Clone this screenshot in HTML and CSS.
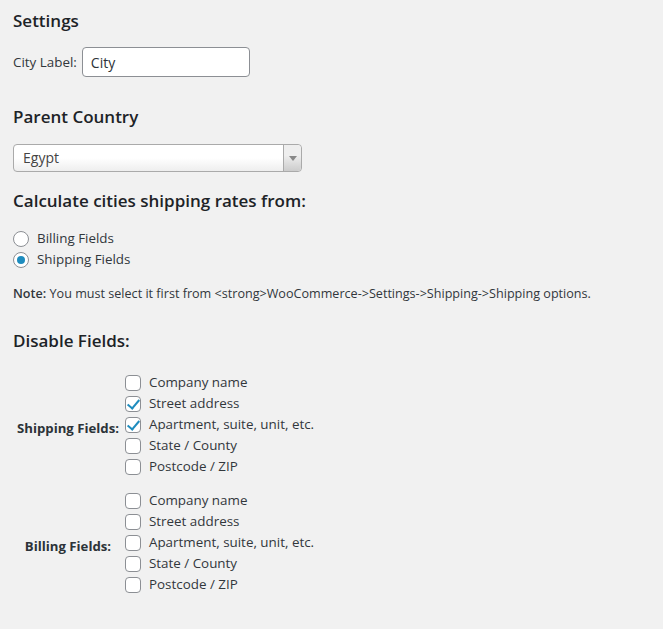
FILE: index.html
```html
<!DOCTYPE html>
<html lang="en">

<head>
    <meta charset="UTF-8">
    <meta name="viewport" content="width=device-width, initial-scale=1.0">
    <title>Settings</title>
    <link rel="stylesheet" href="styles.css">
</head>

<body>
<div class="wrap">
    <h2 class="title">Settings</h2>

    <div class="field-row">
        <label for="city_label">City Label:</label>
        <input type="text" id="city_label" class="regular-text" value="City">
    </div>

    <h2 class="title parent">Parent Country</h2>
    <div class="select2">
        <span class="select2-text">Egypt</span>
        <span class="select2-arrow"><b></b></span>
    </div>

    <h2 class="title calc">Calculate cities shipping rates from:</h2>
    <div class="radio-list">
        <label><input type="radio" name="rates_from" value="billing">Billing Fields</label>
        <label><input type="radio" name="rates_from" value="shipping" checked>Shipping Fields</label>
    </div>
    <p class="note"><strong>Note:</strong> You must select it first from &lt;strong&gt;WooCommerce-&gt;Settings-&gt;Shipping-&gt;Shipping options.</p>

    <h2 class="title disable">Disable Fields:</h2>
    <table class="fields-table">
        <tr>
            <th>Shipping Fields:</th>
            <td>
                <label><input type="checkbox">Company name</label>
                <label><input type="checkbox" checked>Street address</label>
                <label><input type="checkbox" checked>Apartment, suite, unit, etc.</label>
                <label><input type="checkbox">State / County</label>
                <label><input type="checkbox">Postcode / ZIP</label>
            </td>
        </tr>
        <tr class="billing">
            <th>Billing Fields:</th>
            <td>
                <label><input type="checkbox">Company name</label>
                <label><input type="checkbox">Street address</label>
                <label><input type="checkbox">Apartment, suite, unit, etc.</label>
                <label><input type="checkbox">State / County</label>
                <label><input type="checkbox">Postcode / ZIP</label>
            </td>
        </tr>
    </table>
</div>
</body>

</html>
```
FILE: styles.css
```css
body {
    margin: 0;
    background: #f1f1f1;
    color: #32373c;
    font-family: "Open Sans", "Noto Sans", sans-serif;
    font-size: 13.4px;
    line-height: 1.4em;
}
.wrap {
    padding: 0 13px;
}
.title {
    color: #1d2327;
    font-size: 17px;
    font-weight: 600;
    line-height: 22px;
    margin: 10px 0 0;
}
.title.parent {
    margin-top: 29px;
}
.title.calc {
    margin-top: 18px;
}
.title.disable {
    margin-top: 26px;
}
.field-row {
    display: flex;
    align-items: center;
    gap: 5px;
    margin-top: 15px;
}
.regular-text {
    box-sizing: border-box;
    width: 168px;
    height: 30px;
    margin: 0;
    padding: 0 8px;
    border: 1px solid #8c8f94;
    border-radius: 4px;
    background: #fff;
    color: #2c3338;
    font: inherit;
    font-size: 14px;
}
.select2 {
    box-sizing: border-box;
    display: flex;
    width: 289px;
    height: 28px;
    margin-top: 16px;
    border: 1px solid #aaa;
    border-radius: 4px;
    background: linear-gradient(to top, #eee 0%, #fff 50%);
    color: #444;
    font-size: 14px;
}
.select2-text {
    flex: 1;
    padding-left: 9px;
    line-height: 26px;
}
.select2-arrow {
    width: 17px;
    border-left: 1px solid #aaa;
    border-radius: 0 4px 4px 0;
    background: linear-gradient(to top, #ccc 0%, #eee 60%);
    display: flex;
    align-items: center;
    justify-content: center;
}
.select2-arrow b {
    width: 0;
    height: 0;
    border-left: 4px solid transparent;
    border-right: 4px solid transparent;
    border-top: 5px solid #888;
}
.radio-list {
    margin-top: 16px;
}
.radio-list label,
.fields-table label {
    display: flex;
    align-items: center;
    height: 21px;
}
input[type="radio"],
input[type="checkbox"] {
    appearance: none;
    box-sizing: border-box;
    position: relative;
    width: 16px;
    height: 16px;
    margin: 0 8px 0 0;
    border: 1px solid #8c8f94;
    background: #fff;
    flex: none;
}
input[type="radio"] {
    border-radius: 50%;
}
input[type="radio"]:checked::before {
    content: "";
    position: absolute;
    left: 3px;
    top: 3px;
    width: 8px;
    height: 8px;
    border-radius: 50%;
    background: #1e8cbe;
}
input[type="checkbox"] {
    border-radius: 4px;
}
input[type="checkbox"]:checked::before {
    content: "";
    position: absolute;
    left: 4px;
    top: 0;
    width: 5px;
    height: 10px;
    border-right: 2.5px solid #1e8cbe;
    border-bottom: 2.5px solid #1e8cbe;
    transform: rotate(40deg);
}
.note {
    margin: 14px 0 0;
    font-size: 12.6px;
    line-height: 20px;
}
.note strong {
    font-weight: 600;
}
.fields-table {
    margin-top: 20px;
    border-spacing: 0;
}
.fields-table th {
    padding: 8px 5px 0 4px;
    text-align: center;
    font-size: 13.2px;
    font-weight: 700;
    color: #2c3338;
}
.fields-table td {
    padding: 0 0 0 1px;
}
.fields-table .billing td {
    padding-top: 13px;
}
.fields-table .billing th {
    padding-top: 21px;
}
```
